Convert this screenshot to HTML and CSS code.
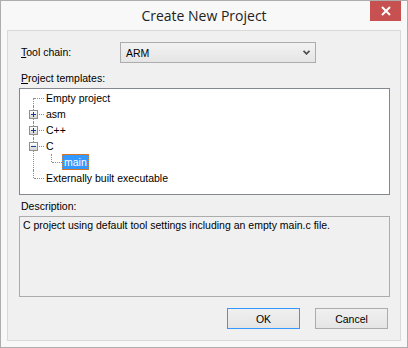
FILE: index.html
```html
<!DOCTYPE html>
<html lang="en">
<head>
    <meta charset="UTF-8">
    <title>Create New Project</title>
    <link rel="stylesheet" href="styles.css">
</head>
<body>
    <div class="window">
        <div class="titlebar">
            <div class="title">Create New Project</div>
            <button class="close-btn" title="Close">
                <svg width="10" height="10" viewBox="0 0 10 10">
                    <path d="M1 1L9 9M9 1L1 9" stroke="#fff" stroke-width="2" fill="none"/>
                </svg>
            </button>
        </div>

        <div class="client">
            <div class="field-row">
                <label class="label"><u>T</u>ool chain:</label>
                <div class="combo">
                    <span>ARM</span>
                    <svg width="7" height="5" viewBox="0 0 7 5">
                        <path d="M0.5 0.8L3.5 3.8L6.5 0.8" stroke="#4d4d4d" stroke-width="1.8" fill="none"/>
                    </svg>
                </div>
            </div>

            <div class="label section-label templates-label"><u>P</u>roject templates:</div>
            <div class="tree-box">
                <ul class="tree">
                    <li><span class="node">Empty project</span></li>
                    <li>
                        <span class="exp"><svg width="7" height="7"><rect x="1" y="3" width="5" height="1" fill="#1c3d8f"/><rect x="3" y="1" width="1" height="5" fill="#1c3d8f"/></svg></span>
                        <span class="node">asm</span>
                    </li>
                    <li>
                        <span class="exp"><svg width="7" height="7"><rect x="1" y="3" width="5" height="1" fill="#1c3d8f"/><rect x="3" y="1" width="1" height="5" fill="#1c3d8f"/></svg></span>
                        <span class="node">C++</span>
                    </li>
                    <li>
                        <span class="exp"><svg width="7" height="7"><rect x="1" y="3" width="5" height="1" fill="#1c3d8f"/></svg></span>
                        <span class="node">C</span>
                        <ul class="tree sub">
                            <li><span class="node selected">main</span></li>
                        </ul>
                    </li>
                    <li><span class="node">Externally built executable</span></li>
                </ul>
            </div>

            <div class="label section-label desc-label">Description:</div>
            <div class="desc-box">C project using default tool settings including an empty main.c file.</div>

            <div class="buttons">
                <button class="btn default">OK</button>
                <button class="btn">Cancel</button>
            </div>
        </div>
    </div>
</body>
</html>
```

FILE: styles.css
```css
body {
    margin: 0;
    padding: 0;
    font-family: "Liberation Sans", Arial, sans-serif;
    font-size: 10.5px;
    color: #000;
}

.window {
    width: 408px;
    height: 348px;
    box-sizing: border-box;
    border: 1px solid #adadad;
    background-color: #f8f8f8;
    display: flex;
    flex-direction: column;
}

/* Title bar */
.titlebar {
    height: 29px;
    display: grid;
    grid-template-columns: 1fr auto 1fr;
    align-items: start;
}

.title {
    grid-column: 2;
    font-family: "Open Sans", sans-serif;
    font-size: 14px;
    line-height: 30px;
    color: #222;
}

.close-btn {
    grid-column: 3;
    justify-self: end;
    width: 31px;
    height: 20px;
    margin-right: 6px;
    padding: 0;
    border: none;
    background-color: #c75050;
    display: flex;
    align-items: center;
    justify-content: center;
}

/* Dialog body */
.client {
    flex: 1;
    margin: 0 6px 6px;
    border: 1px solid #d9d9d9;
    background-color: #f0f0f0;
    padding: 11px 10px 0 11px;
    display: flex;
    flex-direction: column;
}

.label {
    line-height: 13px;
}

.field-row {
    display: flex;
    align-items: center;
    height: 21px;
}

.field-row .label {
    width: 99px;
    padding-left: 2px;
}

.combo {
    width: 196px;
    height: 21px;
    box-sizing: border-box;
    border: 1px solid #acacac;
    background: linear-gradient(#f2f2f2, #e5e5e5);
    display: flex;
    align-items: center;
    justify-content: space-between;
    padding: 0 5px 0 5px;
}

.section-label {
    padding-left: 2px;
}

.templates-label {
    margin-top: 9px;
}

/* Tree */
.tree-box {
    margin-top: 3px;
    height: 107px;
    box-sizing: border-box;
    border: 1px solid #828790;
    background-color: #fff;
    padding-top: 1px;
}

.tree {
    list-style: none;
    margin: 0;
    padding: 0;
}

.tree li {
    position: relative;
    padding-left: 24px;
    line-height: 16px;
}

.tree li::before {
    content: '';
    position: absolute;
    left: 13px;
    top: 0;
    bottom: 0;
    border-left: 1px dotted #8e8e8e;
}

.tree li:first-child::before {
    top: 8px;
}

.tree li:last-child::before {
    bottom: auto;
    height: 8px;
}

.tree li:first-child:last-child::before {
    top: 0;
}

.tree > li:first-child:last-child::before {
    height: 8px;
}

.tree li::after {
    content: '';
    position: absolute;
    left: 14px;
    top: 8px;
    width: 10px;
    border-top: 1px dotted #8e8e8e;
}

.tree.sub {
    margin-left: -6px;
}

.node {
    display: inline-block;
    vertical-align: top;
    height: 16px;
    box-sizing: border-box;
    line-height: 14px;
    padding: 0 1px;
    border: 1px solid transparent;
}

.node.selected {
    background-color: #3399ff;
    color: #fff;
    border: 1px dotted #d9782b;
}

.exp {
    position: absolute;
    left: 9px;
    top: 4px;
    width: 9px;
    height: 9px;
    box-sizing: border-box;
    border: 1px solid #919191;
    background: linear-gradient(#ffffff, #d4d4d4);
    z-index: 1;
}

.exp svg {
    display: block;
}

/* Description */
.desc-label {
    margin-top: 5px;
}

.desc-box {
    margin-top: 3px;
    height: 81px;
    box-sizing: border-box;
    border: 1px solid #acacac;
    padding: 2px 3px;
    line-height: 13px;
}

/* Buttons */
.buttons {
    margin-top: 11px;
    padding-right: 2px;
    display: flex;
    justify-content: flex-end;
    gap: 15px;
}

.btn {
    width: 73px;
    height: 21px;
    padding: 0;
    border: 1px solid #acacac;
    background: linear-gradient(#f0f0f0, #e5e5e5);
    font-family: "Liberation Sans", Arial, sans-serif;
    font-size: 10.5px;
    color: #000;
}

.btn.default {
    border-color: #3399ff;
}
```
